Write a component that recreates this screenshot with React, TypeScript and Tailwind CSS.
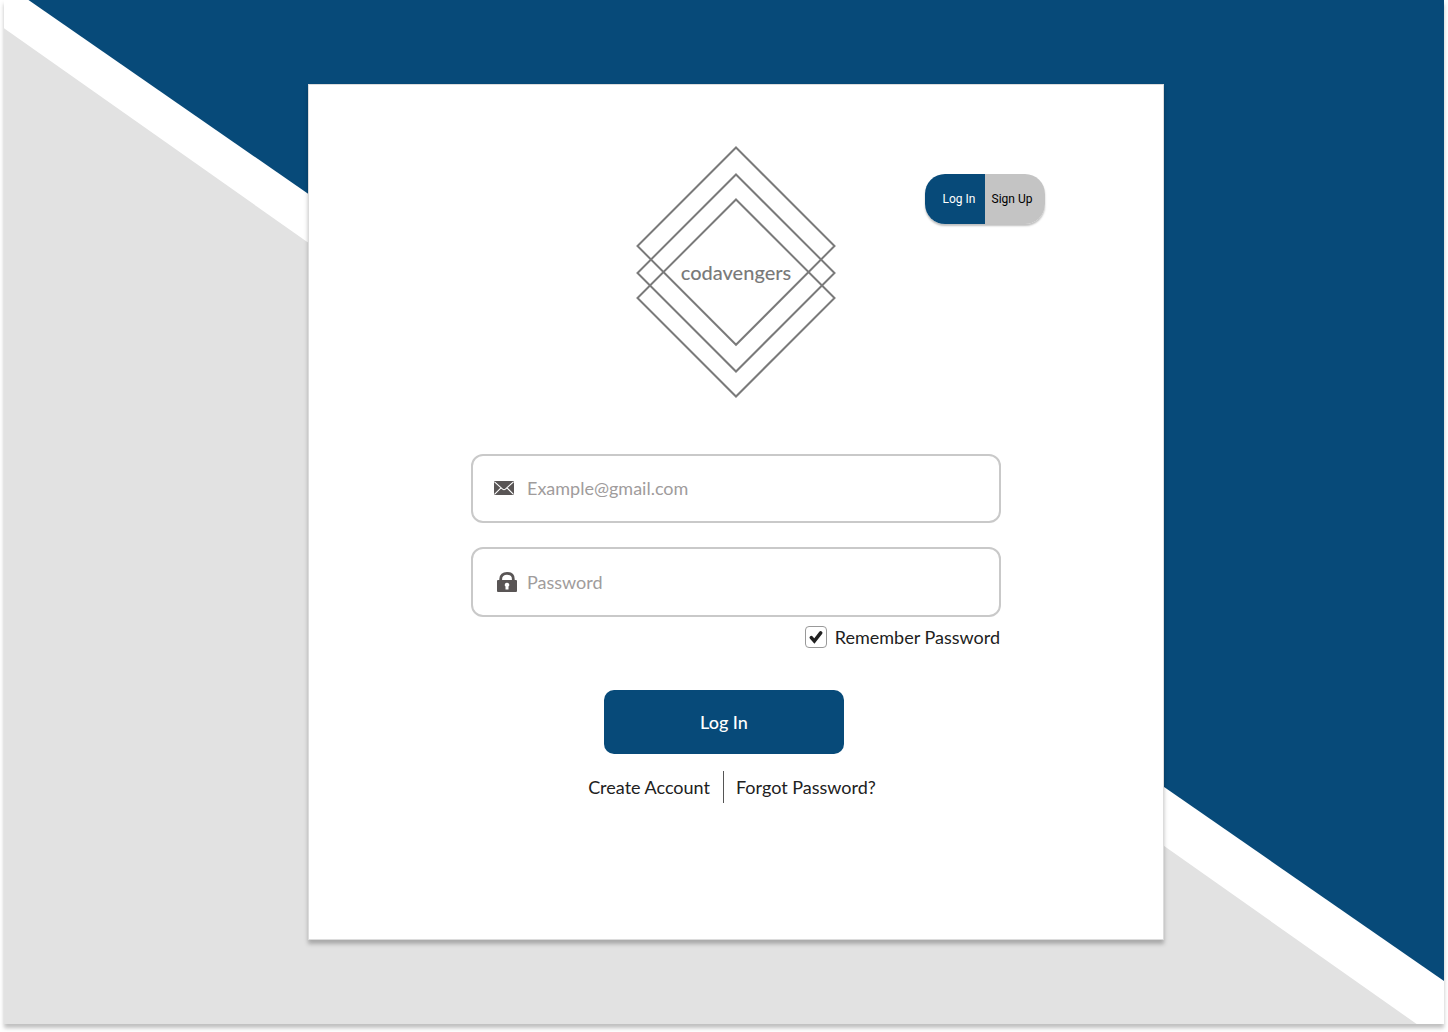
import { useState } from "react";

function Logo() {
  return (
    <div className="relative grid h-[252px] w-[200px] place-items-center">
      <svg
        className="absolute inset-0 h-full w-full"
        viewBox="0 0 200 252"
        fill="none"
        stroke="#7a7a7a"
        strokeWidth="2"
        aria-hidden="true"
      >
        <path d="M100 1.5 198.500 100 100 198.800 1.500 100Z" />
        <path d="M100 28.500 198.500 127 100 225.500 1.500 127Z" />
        <path d="M100 53.500 198.500 152 100 250.500 1.500 152Z" />
      </svg>
      <h1 className="relative font-[Lato] text-xl leading-6 font-medium text-[#7a7a7a]">codavengers</h1>
    </div>
  );
}

function MailIcon() {
  return (
    <svg className="h-[14px] w-5" viewBox="0 0 20 14" aria-hidden="true">
      <rect width="20" height="14" rx="1" fill="#595555" />
      <path
        d="M0.500 0.800 8.600 8.200Q10 9.400 11.400 8.200L19.500 0.800M0.500 13.300 7 6.900M19.500 13.300 13 6.900"
        fill="none"
        stroke="#fff"
        strokeWidth="1.100"
      />
    </svg>
  );
}

function LockIcon() {
  return (
    <svg className="h-5 w-5" viewBox="0 0 20 20" aria-hidden="true">
      <path d="M3.700 9V7C3.700 3.300 6.300 1.400 10 1.400S16.300 3.300 16.300 7V9" fill="none" stroke="#595555" strokeWidth="2.800" />
      <rect y="8" width="20" height="12" rx="1" fill="#595555" />
      <path d="M10 10.800a2.300 2.100 0 0 1 1.500 3.700V17.600H8.500V14.500A2.300 2.100 0 0 1 10 10.800Z" fill="#fff" />
    </svg>
  );
}

export default function App() {
  const [remember, setRemember] = useState(true);
  return (
    <div className="flex min-h-screen flex-col bg-white px-1 pb-2 font-[Lato,sans-serif] text-lg leading-6 text-[#212121]">
      <main className="relative flex flex-1 flex-col items-center justify-center py-[84px] pl-6 shadow-[0_4px_4px_rgba(0,0,0,0.25)]">
        <div className="absolute inset-0 bg-[#e2e2e2] [clip-path:polygon(0_2.75%,98.1%_100%,0_100%)]" />
        <div className="absolute inset-0 bg-[#074a79] [clip-path:polygon(1.7%_0,100%_0,100%_95.8%)]" />

        <section className="relative flex w-full max-w-[856px] flex-col items-center border border-[#dcdcdc] bg-white pt-[61px] pb-[136px] shadow-[0_4px_4px_rgba(0,0,0,0.25)]">
          <div className="grid w-full grid-cols-[1fr_auto_1fr]">
            <div className="col-start-2">
              <Logo />
            </div>
            <nav className="mt-7 ml-[89px] grid h-[50px] w-[120px] grid-cols-2 overflow-hidden rounded-[20px] font-[Roboto] text-xs shadow-[0_2px_2px_rgba(0,0,0,0.25)]">
              <button type="button" className="bg-[#074a79] pl-2 text-white">
                Log In
              </button>
              <button type="button" className="bg-[#c4c4c4] pr-1.5 text-black">
                Sign Up
              </button>
            </nav>
          </div>

          <form className="mt-14 flex w-full max-w-[530px] flex-col" onSubmit={(e) => e.preventDefault()}>
            <label className="flex h-[69px] items-center rounded-xl border-2 border-[#c9c9c9] pb-0.5 pl-[21px]">
              <MailIcon />
              <input
                type="email"
                aria-label="Email"
                placeholder="Example@gmail.com"
                className="ml-[13px] min-w-0 flex-1 outline-none placeholder:text-[#a09c9c]"
              />
            </label>
            <label className="mt-6 flex h-[70px] items-center rounded-xl border-2 border-[#c9c9c9] pl-6">
              <LockIcon />
              <input
                type="password"
                aria-label="Password"
                placeholder="Password"
                className="ml-2.5 min-w-0 flex-1 outline-none placeholder:text-[#a09c9c]"
              />
            </label>

            <label className="mt-2 mr-px flex items-center gap-2 self-end">
              <span className="relative grid h-[22px] w-[22px] place-items-center">
                <input
                  type="checkbox"
                  checked={remember}
                  onChange={(e) => setRemember(e.target.checked)}
                  className="peer absolute inset-0 appearance-none rounded border border-[#999999]"
                />
                <svg className="relative hidden h-[14px] w-[14px] peer-checked:block" viewBox="0 0 12 12" fill="none" aria-hidden="true">
                  <path d="M2 6.500 4.600 9.500 10 2.500" stroke="#212121" strokeWidth="3" strokeLinecap="round" />
                </svg>
              </span>
              Remember Password
            </label>

            <button type="submit" className="mt-[41px] mr-6 h-16 w-60 self-center rounded-[10px] bg-[#074a79] font-medium text-white">
              Log In
            </button>
          </form>

          <div className="mt-[17px] mr-2 flex h-8 items-center">
            <a href="#create">Create Account</a>
            <span className="mr-3 ml-[13px] h-full w-px bg-[#555555]" />
            <a href="#forgot">Forgot Password?</a>
          </div>
        </section>
      </main>
    </div>
  );
}
